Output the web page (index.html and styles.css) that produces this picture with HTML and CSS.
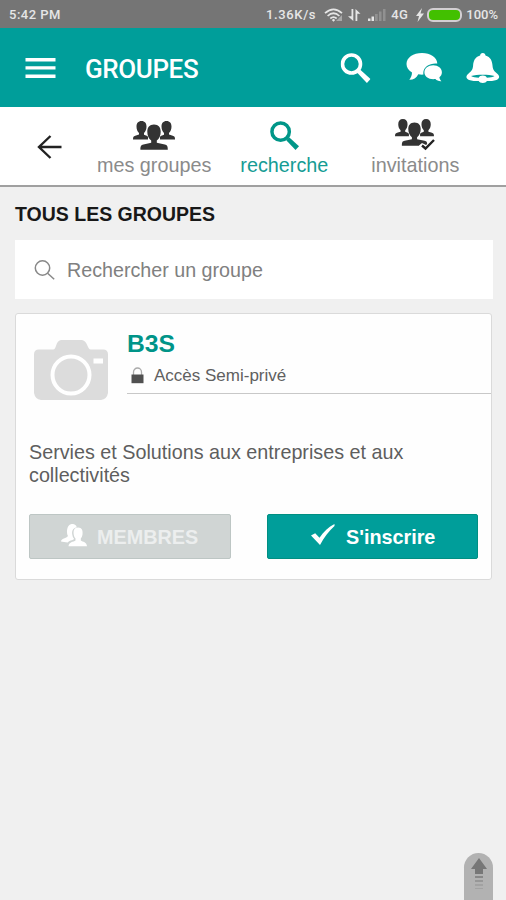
FILE: index.html
```html
<!DOCTYPE html>
<html lang="fr">
<head>
<meta charset="utf-8">
<title>Groupes</title>
<link rel="stylesheet" href="styles.css">
</head>
<body>
<svg width="0" height="0" class="defs">
  <symbol id="people" viewBox="0 0 42 29">
    <path d="M8.500 0c3.300 0 5 2.200 5 5.600 0 2.800-1 5-2.500 6.400v1.800l4 1.400v3.300H0c0-3 1-3.300 3-3.900l3-1V12C4.400 10.600 3.500 8.400 3.500 5.600 3.500 2.200 5.200 0 8.500 0zM33.500 0c-3.300 0-5 2.200-5 5.600 0 2.800 1 5 2.500 6.400v1.800l-4 1.400v3.300h15c0-3-1-3.300-3-3.900l-3-1V12c1.600-1.400 2.500-3.600 2.500-6.400C38.500 2.200 36.800 0 33.500 0z"/>
    <path class="front" d="M21 3.600c4.600 0 6.700 3 6.700 7.200 0 3.800-1.500 7-3.900 8.800v2.200l8 1.600c2.400.5 3 1.600 3 5.400H7.400c0-3.800.6-4.900 3-5.400l7.800-1.600v-2.200c-2.400-1.800-3.900-5-3.900-8.800 0-4.200 2.100-7.200 6.700-7.200z"/>
  </symbol>
  <symbol id="loupe" viewBox="0 0 30 30">
    <circle cx="11" cy="11" r="9" fill="none" stroke="currentColor" stroke-width="3.600"/>
    <path d="M16.800 19.800l3-3 10.200 9.300-3.600 3.800z"/>
  </symbol>
</svg>
<div class="status">
  <span class="time">5:42 PM</span>
  <span class="speed">1.36K/s</span>
  <svg class="wifi" viewBox="0 0 20 14" width="20" height="14"><g fill="none" stroke="currentColor" stroke-width="1.700"><path d="M1 5.200Q9.500-2.400 18 5.200M3.600 8Q9.500 2.500 15.400 8M6.300 10.500q3.200-2.800 6.400 0"/></g><path d="M7.800 12l1.700-1.300 1.700 1.300-1.700 1.700z"/><path d="M12 13l6-6v6z" opacity=".45"/></svg>
  <svg class="data" viewBox="0 0 13 14" width="13" height="14"><path d="M3.500 1h1.800v12L0 8.300h3.500zM7.500 13V1l5 4.700H9.300V13z"/></svg>
  <svg class="signal" viewBox="0 0 18 14" width="18" height="14"><path d="M0 10.500h2.500V13H0zM3.500 8.500H6V13H3.500z"/><path opacity=".25" d="M7 6h2.700v7H7zM11 3.500h2.500V13H11zM15 1h2.500v12H15z"/></svg>
  <span class="net">4G</span>
  <svg class="bolt" viewBox="0 0 8 14" width="8" height="14"><path d="M6 0L0 8h3L1.500 14 8 5.500H4.500z"/></svg>
  <span class="battery"></span>
  <span class="pct">100%</span>
</div>
<header class="bar">
  <svg class="menu" viewBox="0 0 30 20" width="30" height="20"><path d="M0 0h30v3.400H0zM0 8.200h30v3.400H0zM0 16.500h30v3.400H0z"/></svg>
  <h1>GROUPES</h1>
  <svg class="find" width="30" height="30"><use href="#loupe"/></svg>
  <svg class="chat" viewBox="0 0 36 29" width="36" height="29"><path d="M15.500 0C24 0 30.600 4.300 30.800 10.500c-7-.8-14 3-14 9.500 0 .8 0 1.100.2 1.600-2 .1-3.600 0-5.200-.4-2 4-5 5.700-9 5.600 1.600-2.300 2.600-4.200 2.700-7.400C2 17.300 0 14.700 0 11 0 4.500 6.800 0 15.500 0z"/><path d="M26.700 12.300c5 0 8.700 2.900 8.700 7 0 2.200-1 3.800-2.500 5 .1 1.500.8 2.700 2 4-2.600.2-4.600-.7-6-2.200-6.300.8-11-2.200-11-6.800 0-4 3.800-7 8.800-7z"/></svg>
  <svg class="bell" viewBox="0 0 33 30" width="33" height="30"><path fill-rule="evenodd" d="M16.300 0c1.800 0 2.500 1.200 2.700 2.600 5.200 1.600 6.600 5.400 7 9.900.4 4.100 1.400 5.500 4.500 8 3.400 2.700 2.500 5.300-.5 6.400-2.700.8-6.200 1.200-9.600 1.200-.5 1.200-2.200 1.900-4.100 1.900s-3.600-.7-4.100-1.900c-3.400 0-6.900-.4-9.600-1.200-3-1.100-3.900-3.700-.5-6.400 3.100-2.500 4.100-3.900 4.500-8 .4-4.500 1.800-8.300 7-9.900C13.800 1.200 14.500 0 16.300 0zM4.500 23c1.800 1.200 4.600 1.600 7.700 1.800.6-1.300 2.200-2.200 4.100-2.200s3.500.9 4.100 2.200c3.100-.2 5.900-.6 7.700-1.800-6-1.700-17.600-1.700-23.600 0z"/></svg>
</header>
<nav class="tabs">
  <svg class="back" viewBox="0 0 25 24" width="25" height="24"><path class="line" d="M24.500 12H2M13.500 1L2 12l11.500 11"/></svg>
  <a class="mine"><svg width="42" height="29"><use href="#people"/></svg><span>mes groupes</span></a>
  <a class="search"><svg width="29" height="29"><use href="#loupe"/></svg><span>recherche</span></a>
  <a class="invites"><svg width="42" height="31" viewBox="0 0 42 31"><use href="#people" width="39" height="27" x="1"/><path d="M25 26.500l3-2.500 4 2 7-7 3 4v8H27z" fill="#fff"/><path class="line" d="M28 26.500l3.500 3L40 21"/></svg><span>invitations</span></a>
</nav>
<main>
  <h2>TOUS LES GROUPES</h2>
  <div class="field">
    <svg class="glass" viewBox="0 0 21 20" width="21" height="20"><circle cx="8.500" cy="8" r="7.200"/><path d="M13.600 13.200l6.600 6.100"/></svg>
    <span>Rechercher un groupe</span>
  </div>
  <article class="card">
    <div class="top">
      <svg class="camera" viewBox="0 0 74 61" width="74" height="61"><path fill="#dcdcdc" d="M5 9.500h14c4 0 2-8.500 8-9.500h21c6 1 5 9.500 9 9.500h12q5 0 5 5V53q-1 6-7 7H7q-6-1-7-7V14.500q0-5 5-5z"/><circle cx="37" cy="35" r="18.500" fill="none" stroke="#fff" stroke-width="4"/><rect x="59.500" y="18.500" width="9.500" height="5" fill="#fff"/></svg>
      <div class="info">
        <h3>B3S</h3>
        <div class="access"><svg viewBox="0 0 13 17" width="13" height="17"><path d="M2.500 9V5a4 4 0 0 1 8 0v4" fill="none" stroke="#aaa" stroke-width="1.300"/><path d="M.5 7.500h12v8.700H.5z" fill="#505050"/></svg><span>Accès Semi-privé</span></div>
      </div>
    </div>
    <p>Servies et Solutions aux entreprises et aux<br>collectivités</p>
    <div class="actions">
      <div class="btn members"><svg viewBox="0 0 26 23" width="26" height="23"><path fill="#fff" d="M10.500 0c4 0 5.500 2 5 3.500-4 .5-5 4-4 8 .3 1.700 1 2.600 1.700 3.500-2 1.500-5 1.500-6.500 3.500C4 18 2 18 0 17.500c0-3 5.500-3 7-5.500C5.500 10 5 1 10.500 0zM17 3.500c4 0 5 3 4.500 7-.3 2-1 3-1.700 4v2c2 1.500 6 1.500 6.200 5.800H7.500c.2-4.300 5-4.300 7-5.800v-2c-.8-1-1.500-2-1.800-4-.5-4 .5-7 4.300-7z"/></svg><span>MEMBRES</span></div>
      <div class="btn join"><svg viewBox="0 0 24 21" width="24" height="21"><path fill="#fff" d="M0 11.500l4.200-2.200 4.300 4.500C12.500 8 17.500 3 23.500 0v2C18 7 13 13.500 9 21z"/></svg><span>S'inscrire</span></div>
    </div>
  </article>
</main>
<div class="to-top"><svg viewBox="0 0 16 35" width="16" height="35"><path fill="#777" d="M8 0l8 11h-4v5H4v-5H0z"/><path fill="#888" d="M4 18h8v2H4z"/><path fill="#979797" d="M4 22h8v2H4z"/><path fill="#a2a2a2" d="M4 26h8v2H4zM4 30h8v1H4z"/></svg></div>
</body>
</html>
```
FILE: styles.css
```css
* { box-sizing: border-box; }
body {
  margin: 0;
  height: 900px;
  display: flex;
  flex-direction: column;
  overflow: hidden;
  position: relative;
  background: #f0f0f0;
  font-family: "Liberation Sans", sans-serif;
}
h1, h2, h3, p { margin: 0; }
svg { display: block; flex: none; fill: currentColor; overflow: visible; }
span { white-space: nowrap; }
.defs { position: absolute; }
.line { fill: none; stroke: #222; stroke-width: 2.4; }

.status {
  height: 28px;
  flex: none;
  display: flex;
  align-items: center;
  padding: 2px 8px 0 9px;
  background: #757575;
  color: #e6e6e6;
  font: 500 13px/16px Roboto, sans-serif;
}
.time { letter-spacing: .5px; }
.speed { margin-left: auto; letter-spacing: .65px; }
.wifi { margin-left: 8px; }
.data { margin-left: 4px; }
.signal { margin-left: 7px; }
.net { margin-left: 5px; letter-spacing: .4px; }
.bolt { margin-left: 8px; }
.battery {
  width: 35px;
  height: 14px;
  margin-left: 3px;
  border: 2px solid #d3cfd3;
  border-radius: 6px;
  background: #42c000;
}
.pct { margin-left: 4px; }

.bar {
  height: 79px;
  flex: none;
  display: flex;
  align-items: center;
  padding: 0 7px 0 25px;
  background: #009e9a;
  color: #fff;
}
.bar h1 { margin: 3px 0 0 30px; font: 500 26px/32px Roboto, sans-serif; letter-spacing: -.4px; }
.find { margin-left: auto; }
.chat { margin-left: 36px; }
.bell { margin-left: 24px; }
.find, .chat, .bell, .menu { transform: translateX(.5px); }

.tabs {
  height: 80px;
  flex: none;
  display: flex;
  background: #fff;
  border-bottom: 2px solid #a0a0a0;
  color: #333;
}
.back { margin: 28px 0 0 37px; }
.tabs a { display: flex; flex-direction: column; align-items: center; }
.tabs span { font-size: 19.8px; line-height: 22px; color: #8b8b8b; }
.tabs a svg { margin-bottom: 4px; }
.front { stroke: #fff; stroke-width: 1; paint-order: stroke; }
.mine { margin-left: 35px; padding-top: 14px; }
.search { margin-left: 29px; padding-top: 14px; color: #009688; }
.tabs .search span { color: #159c94; }
.invites { margin-left: 43px; padding-top: 12px; }

main { padding: 16px 13px 0 15px; }
h2 { font-size: 19.5px; line-height: 22px; color: #181818; }
.field {
  height: 59px;
  margin-top: 15px;
  padding: 1px 0 0 19px;
  display: flex;
  align-items: center;
  background: #fff;
}
.glass { fill: none; stroke: #888; stroke-width: 1.5; }
.field span { margin-left: 12px; font-size: 19.7px; color: #808080; }

.card {
  height: 267px;
  margin: 14px 1px 0 0;
  background: #fefefe;
  border: 1px solid #dadada;
  border-radius: 3px;
}
.top { display: flex; }
.camera { margin: 26px 0 0 18px; }
.info { flex: 1; margin-left: 19px; height: 80px; border-bottom: 1px solid #c8c8c8; }
h3 { margin: 16px 0 0; font-size: 24.7px; line-height: 28px; color: #009488; }
.access { display: flex; align-items: center; margin: 8px 0 0 4px; }
.access svg { margin-top: -1px; }
.access span { margin-left: 10px; font-size: 17px; line-height: 20px; color: #606060; }
.card p { margin: 40px 0 0 13px; font-size: 19.75px; line-height: 23px; color: #5e5e5e; white-space: nowrap; }
.actions { display: flex; justify-content: space-between; margin: 27px 13px 0; }
.btn { display: flex; align-items: center; height: 45px; padding-top: 1px; font-size: 19.8px; font-weight: bold; border-radius: 2px; }
.members { width: 202px; padding-left: 31px; background: #d0d5d4; border: 1px solid #bdc6c4; color: #eceeee; }
.members span { margin-left: 10px; }
.members svg { margin-top: -3px; }
.join { width: 211px; padding-left: 43px; background: #009e9a; border: 1px solid #008f82; color: #fff; }
.join svg { margin-top: -5px; }
.join span { margin-left: 11px; }

.to-top {
  position: absolute;
  left: 464px;
  bottom: 0;
  width: 29px;
  height: 47px;
  padding: 5px 0 0 7px;
  border-radius: 15px 15px 0 0;
  background: #b2b2b2;
}
```
